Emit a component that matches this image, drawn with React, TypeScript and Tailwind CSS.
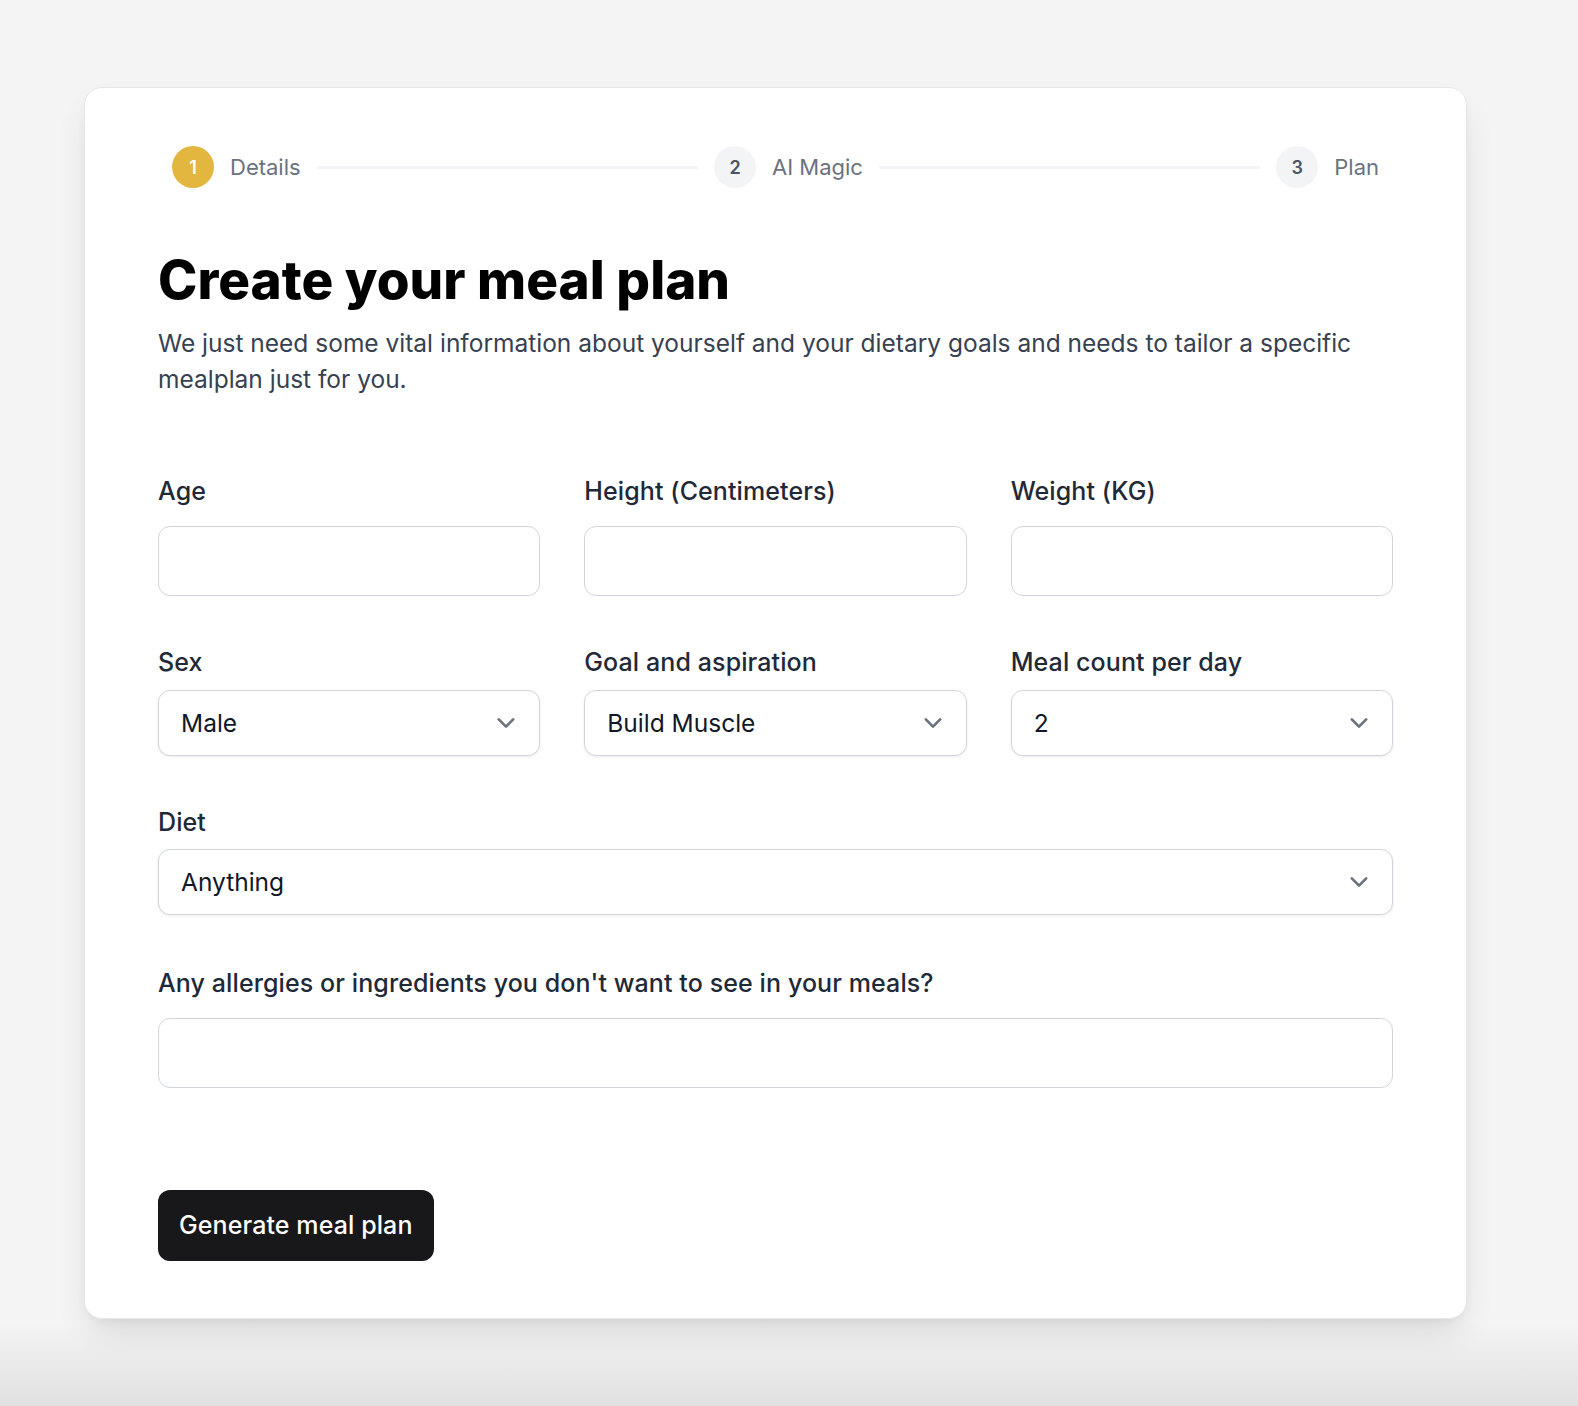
import { ReactNode } from "react";

const font = { fontFamily: "Inter, 'Noto Sans', sans-serif" };

function Chevron() {
  return (
    <svg viewBox="0 0 20 20" fill="none" className="h-[36px] w-[36px] shrink-0">
      <path d="M6 8l4 4 4-4" stroke="#6b7280" strokeWidth="1.5" strokeLinecap="round" strokeLinejoin="round" />
    </svg>
  );
}

function Step({ n, label, active }: { n: number; label: string; active?: boolean }) {
  return (
    <div className="flex items-center">
      <span
        className={
          active
            ? "flex h-[42px] w-[42px] items-center justify-center rounded-full bg-[#e3b63f] text-[18px] font-semibold text-white"
            : "flex h-[42px] w-[42px] items-center justify-center rounded-full bg-[#f3f4f6] text-[18px] font-semibold text-[#4b5563]"
        }
      >
        {n}
      </span>
      <span className="ml-4 text-[22px] text-[#6b7280]">{label}</span>
    </div>
  );
}

function Line() {
  return <div className="mx-4 h-[3px] flex-1 bg-[#f3f4f6]" />;
}

function Field({ label, children, gap }: { label: string; children: ReactNode; gap: string }) {
  return (
    <div className="flex flex-col">
      <label className="text-[25px] font-medium leading-[36px] tracking-[0.1px] text-[#1f2937]">{label}</label>
      <div className={gap}>{children}</div>
    </div>
  );
}

function TextInput() {
  return (
    <input
      type="text"
      className="block h-[70px] w-full rounded-[12px] border border-[#d1d5db] bg-white px-[22px] text-[24px] text-[#111827] outline-none"
    />
  );
}

function Select({ value }: { value: string }) {
  return (
    <div className="flex h-[66px] w-full items-center justify-between rounded-[12px] border border-[#d1d5db] bg-white pl-[22px] pr-[15px] shadow-[0_1px_3px_rgba(0,0,0,0.08)]">
      <span className="text-[24.5px] text-[#111827]">{value}</span>
      <Chevron />
    </div>
  );
}

export default function App() {
  return (
    <div
      style={font}
      className="min-h-[1406px] bg-[linear-gradient(to_bottom,#f4f4f4_0%,#f4f4f4_94%,#e0e0e0_100%)] pl-[84px] pr-[111px] pt-[87px]"
    >
      <div className="rounded-[18px] border border-[#e7e7e7] bg-white px-[73px] pb-[57px] pt-[58px] shadow-[0_18px_36px_-8px_rgba(0,0,0,0.12),0_6px_14px_-6px_rgba(0,0,0,0.08)]">
        {/* Stepper */}
        <div className="flex items-center px-[14px]">
          <Step n={1} label="Details" active />
          <Line />
          <Step n={2} label="AI Magic" />
          <Line />
          <Step n={3} label="Plan" />
        </div>

        <h1 className="mt-[66px] text-[53px] font-extrabold leading-none text-black">Create your meal plan</h1>
        <p className="mt-[18px] text-[24.5px] leading-[36px] text-[#374151]">
          We just need some vital information about yourself and your dietary goals and needs to tailor a specific
          mealplan just for you.
        </p>

        <div className="mt-[76px] grid grid-cols-3 gap-x-[44px]">
          <Field label="Age" gap="mt-[17px]">
            <TextInput />
          </Field>
          <Field label="Height (Centimeters)" gap="mt-[17px]">
            <TextInput />
          </Field>
          <Field label="Weight (KG)" gap="mt-[17px]">
            <TextInput />
          </Field>
        </div>

        <div className="mt-[48px] grid grid-cols-3 gap-x-[44px]">
          <Field label="Sex" gap="mt-[10px]">
            <Select value="Male" />
          </Field>
          <Field label="Goal and aspiration" gap="mt-[10px]">
            <Select value="Build Muscle" />
          </Field>
          <Field label="Meal count per day" gap="mt-[10px]">
            <Select value="2" />
          </Field>
        </div>

        <div className="mt-[48px]">
          <Field label="Diet" gap="mt-[9px]">
            <Select value="Anything" />
          </Field>
        </div>

        <div className="mt-[50px]">
          <Field label="Any allergies or ingredients you don't want to see in your meals?" gap="mt-[17px]">
            <TextInput />
          </Field>
        </div>

        <button
          type="button"
          className="mt-[102px] flex h-[71px] items-center rounded-[12px] bg-[#18181b] px-[21px] text-[25px] font-medium tracking-[0.1px] text-white"
        >
          Generate meal plan
        </button>
      </div>
    </div>
  );
}
